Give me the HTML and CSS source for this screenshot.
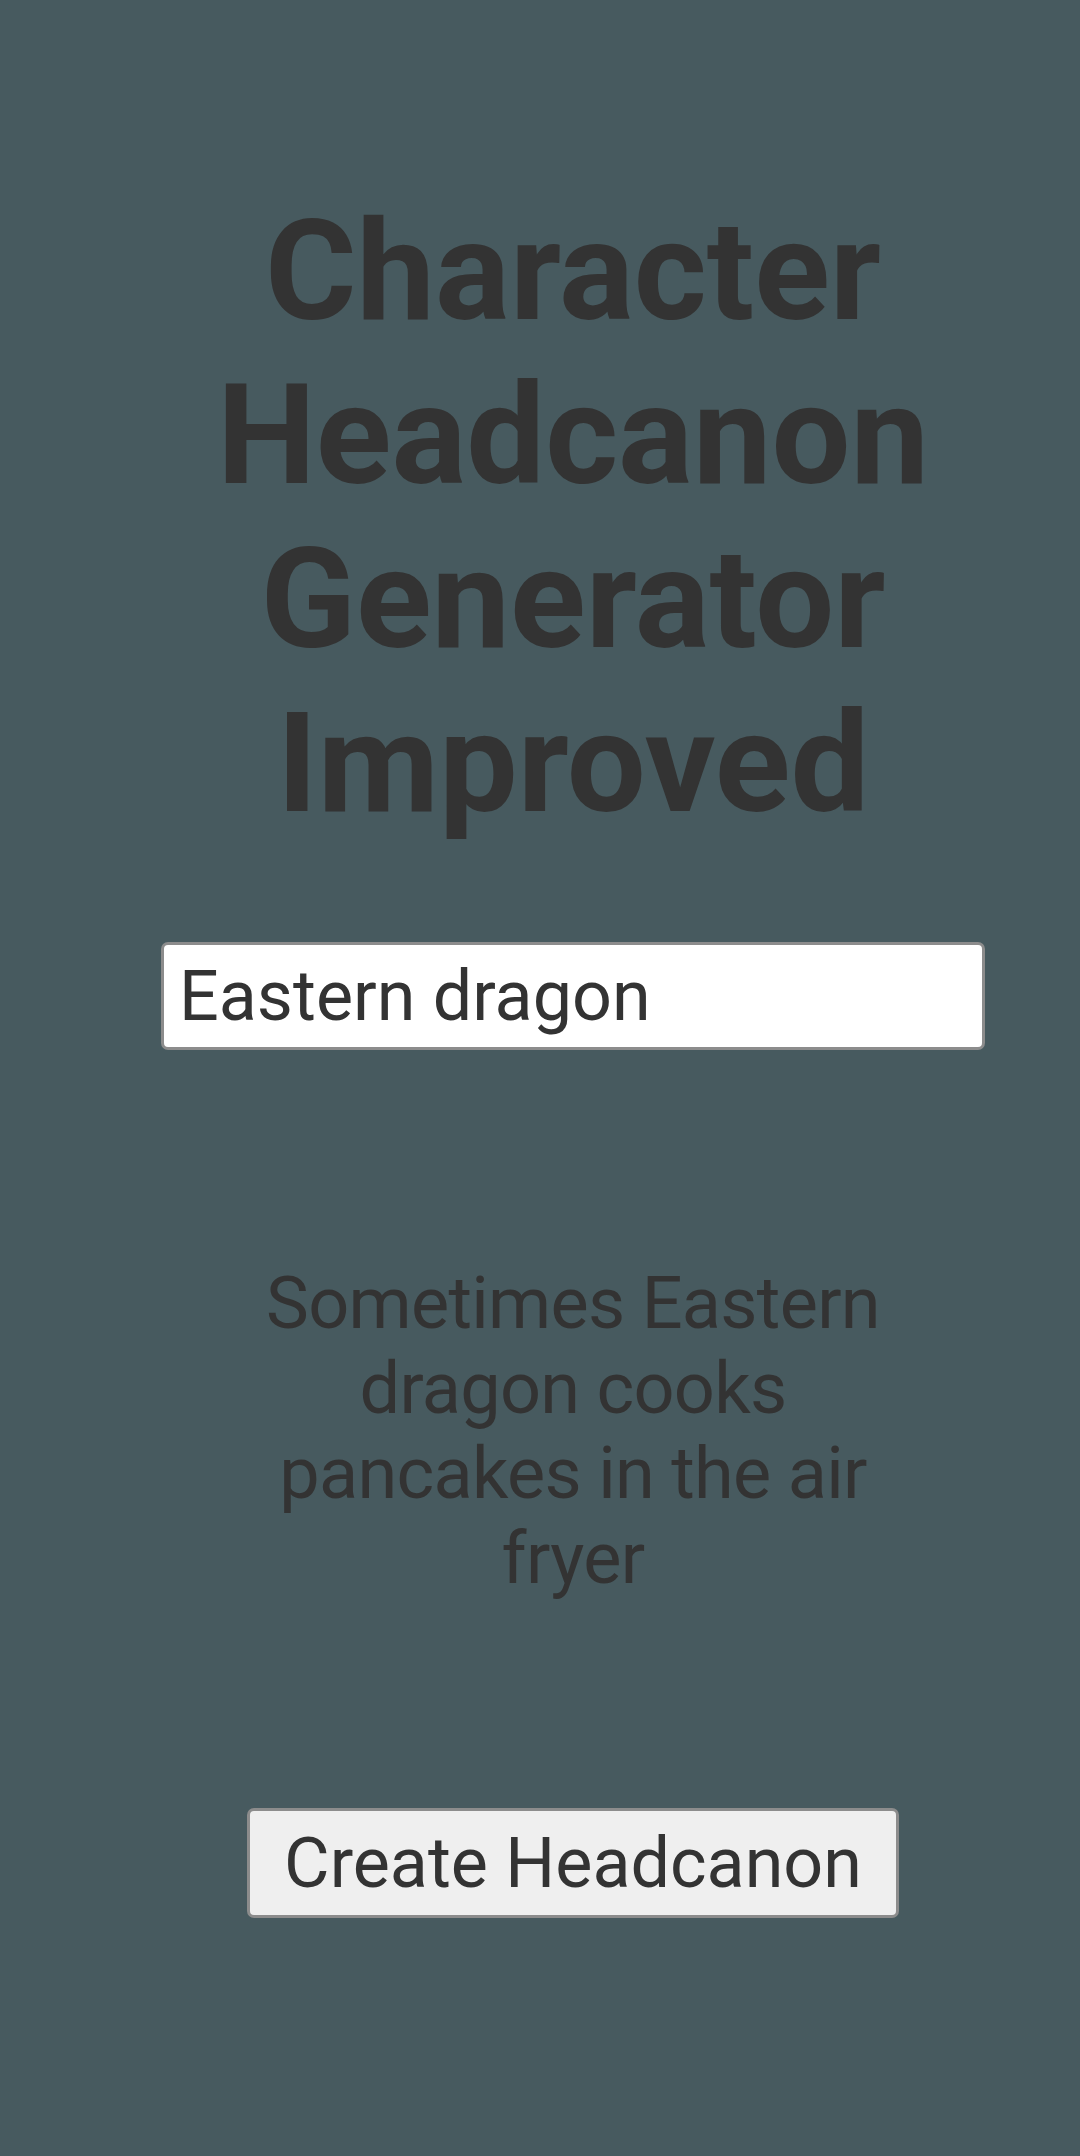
FILE: index.html
```html
<!DOCTYPE html>
<html lang="en">
<head>
    <meta charset="UTF-8">
    <meta name="viewport" content="width=device-width, initial-scale=1.0">
    <title>Character Headcanon Generator Improved</title>
    <link rel="stylesheet" href="styles.css">
</head>
<body>
    <div class="page">
        <h1 class="title">Character Headcanon Generator Improved</h1>

        <input type="text" id="characterName" class="name-input" value="Eastern dragon">

        <p id="headcanonText" class="headcanon">Sometimes Eastern dragon cooks pancakes in the air fryer</p>

        <button class="create-button" onclick="createHeadcanon()">Create Headcanon</button>
    </div>

    <script>
        const headcanons = [
            'Sometimes {name} cooks pancakes in the air fryer',
            '{name} secretly collects rubber ducks',
            '{name} hums while reading',
            '{name} is afraid of moths'
        ];

        function createHeadcanon() {
            const name = document.getElementById('characterName').value || 'they';
            const pick = headcanons[Math.floor(Math.random() * headcanons.length)];
            document.getElementById('headcanonText').textContent = pick.replace('{name}', name);
        }
    </script>
</body>
</html>
```

FILE: styles.css
```css
body, html {
    margin: 0;
    padding: 0;
    background-color: #475a5f;
    font-family: Roboto, "Liberation Sans", sans-serif;
    color: #333333;
}

.page {
    padding-left: 66px;
    text-align: center;
}

.title {
    margin: 0;
    padding-top: 189px;
    font-size: 140px;
    font-weight: bold;
    line-height: normal;
}

.name-input {
    display: block;
    box-sizing: border-box;
    width: 824px;
    height: 108px;
    margin: 97px auto 0;
    padding: 0 15px;
    border: 3px solid #8c8c8c;
    border-radius: 7px;
    background-color: white;
    font-family: Roboto, "Liberation Sans", sans-serif;
    font-size: 70px;
    color: #333333;
}

.headcanon {
    max-width: 680px;
    margin: 211px auto 0;
    font-size: 72px;
    letter-spacing: -0.7px;
    line-height: normal;
}

.create-button {
    box-sizing: border-box;
    height: 110px;
    margin-top: 207px;
    padding: 0 34px;
    border: 3px solid #8c8c8c;
    border-radius: 7px;
    background-color: #efefef;
    font-family: Roboto, "Liberation Sans", sans-serif;
    font-size: 70px;
    color: #333333;
    cursor: pointer;
}
```
